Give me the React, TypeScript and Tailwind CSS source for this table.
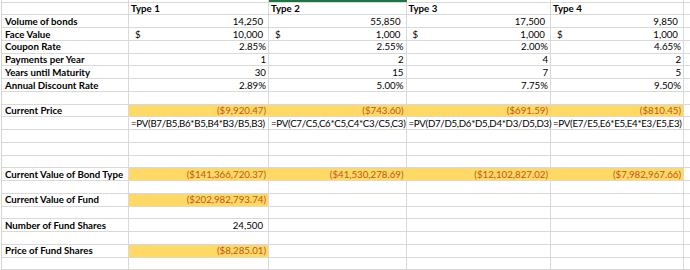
import React from "react";

type Cell = {
  t?: string;
  kind?: "r" | "rs" | "l" | "f" | "acct";
  y?: boolean;
  o?: boolean;
};

const cols = ["w-[127px]", "w-[140px]", "w-[137.5px]", "w-[144.5px]", "w-[133px]", "flex-1"];

const R = (vals: string[], kind: Cell["kind"], y = false, o = false): Cell[] =>
  vals.map((t) => ({ t, kind, y, o }));

const rows: { label: string; cells: Cell[] }[] = [
  { label: "", cells: R(["Type 1", "Type 2", "Type 3", "Type 4"], "l") },
  { label: "Volume of bonds", cells: R(["14,250", "55,850", "17,500", "9,850"], "rs") },
  { label: "Face Value", cells: R(["10,000", "1,000", "1,000", "1,000"], "acct") },
  { label: "Coupon Rate", cells: R(["2.85%", "2.55%", "2.00%", "4.65%"], "r") },
  { label: "Payments per Year", cells: R(["1", "2", "4", "2"], "r") },
  { label: "Years until Maturity", cells: R(["30", "15", "7", "5"], "r") },
  { label: "Annual Discount Rate", cells: R(["2.89%", "5.00%", "7.75%", "9.50%"], "r") },
  { label: "", cells: [] },
  { label: "Current Price", cells: R(["($9,920.47)", "($743.60)", "($691.59)", "($810.45)"], "r", true, true) },
  {
    label: "",
    cells: R(
      [
        "=PV(B7/B5,B6*B5,B4*B3/B5,B3)",
        "=PV(C7/C5,C6*C5,C4*C3/C5,C3)",
        "=PV(D7/D5,D6*D5,D4*D3/D5,D3)",
        "=PV(E7/E5,E6*E5,E4*E3/E5,E3)",
      ],
      "f"
    ),
  },
  { label: "", cells: [] },
  { label: "", cells: [] },
  { label: "", cells: [] },
  {
    label: "Current Value of Bond Type",
    cells: R(["($141,366,720.37)", "($41,530,278.69)", "($12,102,827.02)", "($7,982,967.66)"], "r", true, true),
  },
  { label: "", cells: [] },
  { label: "Current Value of Fund", cells: R(["($202,982,793.74)"], "r", true, true) },
  { label: "", cells: [] },
  { label: "Number of Fund Shares", cells: R(["24,500"], "rs") },
  { label: "", cells: [] },
  { label: "Price of Fund Shares", cells: R(["($8,285.01)"], "r", true, true) },
  { label: "", cells: [] },
];

function DataCell({ c, idx, headerRow, nextYellow }: { c?: Cell; idx: number; headerRow: boolean; nextYellow: boolean }) {
  const w = cols[idx + 1];
  const yellow = c?.y;
  const rightBorder = yellow && nextYellow ? "border-r-[#FFD966]" : "border-r-[#D9D9D9]";
  const base = `${w} shrink-0 h-full border-r ${rightBorder} flex items-center pt-[1px] whitespace-nowrap overflow-visible ${
    yellow ? "bg-[#FFD966]" : ""
  } ${c?.o ? "text-[#C0561A]" : "text-black"} ${headerRow ? "font-bold" : ""}`;
  if (!c || !c.t) return <div className={base} />;
  if (c.kind === "acct") {
    return (
      <div className={`${base} justify-between pl-[6px] pr-[5px]`}>
        <span>$</span>
        <span>{c.t}</span>
      </div>
    );
  }
  if (c.kind === "l") return <div className={`${base} justify-start pl-[2px]`}>{c.t}</div>;
  if (c.kind === "f") return <div className={`${base} justify-start pl-[2px] tracking-[-0.28px]`}>{c.t}</div>;
  if (c.kind === "rs") return <div className={`${base} justify-end pr-[5px]`}>{c.t}</div>;
  return <div className={`${base} justify-end pr-[2px]`}>{c.t}</div>;
}

export default function App() {
  return (
    <div
      className="w-[690px] h-[270px] overflow-hidden bg-white text-[9.7px] leading-none"
      style={{ fontFamily: "Lato, 'Liberation Sans', sans-serif" }}
    >
      <div className="ml-px border-l border-l-[#D4D4D4]">
        <div className="flex h-[2.6px] border-b border-b-[#D9D9D9]">
          <div className={`${cols[0]} shrink-0 border-r border-r-[#D9D9D9]`} />
          <div className={`${cols[1]} shrink-0 border-r border-r-[#D9D9D9]`} />
          <div className={`${cols[2]} shrink-0 bg-[#217346]`} />
          <div className={`${cols[3]} shrink-0 border-r border-r-[#D9D9D9]`} />
          <div className={`${cols[4]} shrink-0 border-r border-r-[#D9D9D9]`} />
          <div className="flex-1" />
        </div>
        {rows.map((r, i) => (
          <div key={i} className="flex h-[12.75px] border-b border-b-[#D9D9D9]">
            <div
              className={`${cols[0]} shrink-0 h-full border-r border-r-[#D9D9D9] flex items-center pt-[1px] pl-[3px] font-bold text-black whitespace-nowrap`}
            >
              {r.label}
            </div>
            {[0, 1, 2, 3].map((j) => (
              <DataCell key={j} c={r.cells[j]} idx={j} headerRow={i === 0} nextYellow={!!r.cells[j + 1]?.y} />
            ))}
            <div className="flex-1 h-full" />
          </div>
        ))}
      </div>
    </div>
  );
}
